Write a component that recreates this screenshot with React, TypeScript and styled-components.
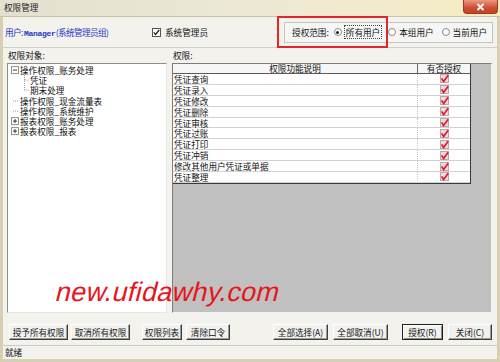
import React from "react";
import styled, { createGlobalStyle } from "styled-components";

const FONT = `"Noto Sans CJK SC", "Noto Sans", sans-serif`;

const GlobalStyle = createGlobalStyle`
  html, body { margin: 0; padding: 0; background: #ffffff; }
  body { font-family: ${FONT}; }
  * { box-sizing: border-box; }
`;

const Window = styled.div`
  position: relative;
  width: 500px;
  height: 362px;
  display: flex;
  flex-direction: column;
  background: #d6cfb4;
  font-family: ${FONT};
  font-size: 8.6px;
  color: #111;
  overflow: hidden;
`;

const TitleBar = styled.div`
  flex: none;
  height: 17px;
  display: flex;
  justify-content: space-between;
  padding-left: 4px;
  background: linear-gradient(to right, #e4e0d0, #ece8d6 45%, #f6ecc4);
  border-bottom: 1px solid #c9c2a6;
`;

const Title = styled.span`
  line-height: 15px;
  color: #222;
`;

const CloseButton = styled.div`
  width: 35px;
  height: 14px;
  margin-right: 2px;
  border: 1px solid #9b3b26;
  border-top: none;
  border-radius: 0 0 4px 4px;
  background: linear-gradient(#ec9a80, #cf4d31 60%, #c44328);
  display: flex;
  align-items: center;
  justify-content: center;
`;

const Body = styled.div`
  position: relative;
  flex: 1;
  margin: 0 3px 3px 3px;
  display: flex;
  flex-direction: column;
  background: #f3f2ed;
`;

const TopPanel = styled.div`
  flex: none;
  height: 31px;
  display: flex;
  align-items: center;
  padding: 0 4px 0 2px;
  border-bottom: 1px solid #cfcfcf;
`;

const UserLabel = styled.div`
  width: 147px;
  color: #2338c8;
  white-space: nowrap;
  letter-spacing: -0.6px;
`;

const UserName = styled.span`
  font-family: "Liberation Mono", monospace;
  font-size: 8px;
  font-weight: bold;
  letter-spacing: -0.3px;
`;

const CheckLabel = styled.label`
  display: flex;
  align-items: center;
  gap: 4px;
`;

const CheckBox = styled.span`
  width: 9px;
  height: 9px;
  border: 1px solid #555;
  background: #fff;
  display: flex;
  align-items: center;
  justify-content: center;
`;

const RadioGroup = styled.div`
  margin-left: auto;
  height: 21px;
  display: flex;
  align-items: center;
  padding: 0 5px 0 7px;
  border: 1px solid #c4c4c4;
  background: #f6f6f4;
`;

const RadioItem = styled.span<{ $gap: number }>`
  display: flex;
  align-items: center;
  gap: 3px;
  margin-left: ${(p) => p.$gap}px;
  white-space: nowrap;
`;

const RadioDot = styled.span<{ $on?: boolean }>`
  width: 8px;
  height: 8px;
  border-radius: 50%;
  border: 1px solid #8a8a8a;
  background: #fff;
  display: flex;
  align-items: center;
  justify-content: center;
  &::after {
    content: "";
    width: 3px;
    height: 3px;
    border-radius: 50%;
    background: ${(p) => (p.$on ? "#222" : "transparent")};
  }
`;

const Focused = styled.span`
  outline: 1px dotted #444;
  outline-offset: 0px;
  padding: 0 1px;
`;

const RedFrame = styled.div`
  position: absolute;
  left: 274px;
  top: -1px;
  width: 111px;
  height: 32px;
  border: 2px solid #e2262b;
  pointer-events: none;
`;

const Main = styled.div`
  flex: 1;
  display: flex;
  gap: 5px;
  padding: 0 5px 0 4px;
  min-height: 0;
`;

const Pane = styled.div<{ $w?: number }>`
  display: flex;
  flex-direction: column;
  ${(p) => (p.$w ? `width: ${p.$w}px; flex: none;` : "flex: 1;")}
`;

const PaneLabel = styled.div`
  height: 15px;
  line-height: 15px;
  padding-left: 1px;
`;

const TreeBox = styled.div`
  flex: 1;
  background: #fff;
  border: 1px solid;
  border-color: #8d8d8d #e6e6e6 #e6e6e6 #8d8d8d;
  padding-top: 1px;
`;

const TreeRow = styled.div<{ $indent: number }>`
  display: flex;
  align-items: center;
  height: 10.2px;
  line-height: 10px;
  padding-left: ${(p) => p.$indent}px;
  white-space: nowrap;
`;

const Twig = styled.svg<{ $w: number }>`
  flex: none;
  width: ${(p) => p.$w}px;
  height: 10.2px;
  margin-right: 1px;
`;

const GridBox = styled.div`
  flex: 1;
  background: #c0c0c0;
  border: 1px solid;
  border-color: #7d7d7d #f4f4f4 #f4f4f4 #7d7d7d;
`;

const Table = styled.div`
  display: grid;
  grid-template-columns: 245px 52px;
  grid-template-rows: 10px repeat(10, 10.9px);
  width: 298px;
  background: #fff;
  border-right: 1px solid #3a3a3a;
  border-bottom: 1px solid #3a3a3a;
`;

const HeadCell = styled.div`
  background: #f6f6f6;
  border-right: 1px solid #6a6a6a;
  border-bottom: 1px solid #5a5a5a;
  text-align: center;
  line-height: 9px;
  &:nth-child(2) { border-right: none; }
`;

const Cell = styled.div<{ $center?: boolean }>`
  border-bottom: 1px solid #d2d2d2;
  border-right: ${(p) => (p.$center ? "none" : "1px dotted #c4c4c4")};
  padding-left: 1px;
  line-height: 10px;
  white-space: nowrap;
  display: flex;
  align-items: center;
  justify-content: ${(p) => (p.$center ? "center" : "flex-start")};
`;

const ButtonBar = styled.div`
  flex: none;
  height: 32px;
  display: flex;
  padding: 11px 5px 5px 6px;
`;

const Button = styled.button<{ $w: number; $gap: number; $default?: boolean }>`
  width: ${(p) => p.$w}px;
  height: 16px;
  margin-left: ${(p) => p.$gap}px;
  padding: 0;
  font-family: ${FONT};
  font-size: 8.6px;
  color: #111;
  background: #f1f1ef;
  border: 1px solid;
  border-color: ${(p) => (p.$default ? "#202020" : "#ffffff #3e3e3e #3e3e3e #ffffff")};
  box-shadow: ${(p) =>
    p.$default
      ? "inset 1px 1px #fff, inset -1px -1px #8a8a8a"
      : "inset -1px -1px #9a9a9a"};
  line-height: 14px;
  white-space: nowrap;
`;

const StatusBar = styled.div`
  flex: none;
  height: 14px;
  line-height: 13px;
  padding-left: 2px;
  border-top: 1px solid #cacaca;
  background: #f3f2ed;
`;

const Watermark = styled.div`
  position: absolute;
  left: 53px;
  top: 279px;
  font-family: "Liberation Sans", Arial, sans-serif;
  font-size: 27px;
  line-height: 27px;
  letter-spacing: 0.3px;
  color: #e8141c;
  white-space: nowrap;
  pointer-events: none;
  transform: skewX(-14deg);
  transform-origin: left bottom;
`;

const Expander = ({ plus }: { plus?: boolean }) => (
  <Twig $w={8} viewBox="0 0 8 10.2">
    <rect x="0.5" y="1.6" width="7" height="7" fill="#fff" stroke="#8f8f8f" strokeWidth="1" />
    <line x1="2" y1="5.1" x2="6" y2="5.1" stroke="#333" strokeWidth="1" />
    {plus && <line x1="4" y1="3.1" x2="4" y2="7.1" stroke="#333" strokeWidth="1" />}
  </Twig>
);

const LeafTwig = () => (
  <Twig $w={8} viewBox="0 0 8 10.2">
    <line x1="2" y1="5.1" x2="8" y2="5.1" stroke="#9a9a9a" strokeWidth="1" strokeDasharray="1 1" />
  </Twig>
);

const ChildTwig = ({ last }: { last?: boolean }) => (
  <Twig $w={5} viewBox="0 0 5 10.2">
    <line x1="0.5" y1="0" x2="0.5" y2={last ? 5.1 : 10.2} stroke="#9a9a9a" strokeWidth="1" strokeDasharray="1 1" />
    <line x1="0.5" y1="5.1" x2="5" y2="5.1" stroke="#9a9a9a" strokeWidth="1" strokeDasharray="1 1" />
  </Twig>
);

const CheckMark = () => (
  <svg width="9" height="9" viewBox="0 0 9 9">
    <rect x="0.5" y="0.5" width="8" height="8" fill="#eedcdc" stroke="#b8a8a8" strokeWidth="1" />
    <path d="M1.6 4.4 L3.6 7.4 L8.2 1.2" fill="none" stroke="#e0182a" strokeWidth="1.7" />
  </svg>
);

type TreeItem = { kind: "minus" | "plus" | "leaf" | "child" | "last"; text: string };

const treeItems: TreeItem[] = [
  { kind: "minus", text: "操作权限_账务处理" },
  { kind: "child", text: "凭证" },
  { kind: "last", text: "期末处理" },
  { kind: "leaf", text: "操作权限_现金流量表" },
  { kind: "leaf", text: "操作权限_系统维护" },
  { kind: "plus", text: "报表权限_账务处理" },
  { kind: "plus", text: "报表权限_报表" },
];

const rights = [
  "凭证查询",
  "凭证录入",
  "凭证修改",
  "凭证删除",
  "凭证审核",
  "凭证过账",
  "凭证打印",
  "凭证冲销",
  "修改其他用户凭证或单据",
  "凭证整理",
];

const buttons = [
  { t: "授予所有权限", w: 59, g: 0 },
  { t: "取消所有权限", w: 59, g: 3 },
  { t: "权限列表", w: 40, g: 12 },
  { t: "清除口令", w: 44, g: 4 },
  { t: "全部选择(A)", w: 55, g: 43 },
  { t: "全部取消(U)", w: 55, g: 5 },
  { t: "授权(R)", w: 41, g: 14, d: true },
  { t: "关闭(C)", w: 44, g: 5 },
];

export default function App() {
  return (
    <>
      <GlobalStyle />
      <Window>
        <TitleBar>
          <Title>权限管理</Title>
          <CloseButton>
            <svg width="9" height="8" viewBox="0 0 9 8">
              <path d="M1.5 1 L7.5 7 M7.5 1 L1.5 7" stroke="#fff" strokeWidth="1.8" />
            </svg>
          </CloseButton>
        </TitleBar>
        <Body>
          <TopPanel>
            <UserLabel>
              用户: <UserName>Manager</UserName>(系统管理员组)
            </UserLabel>
            <CheckLabel>
              <CheckBox>
                <svg width="7" height="7" viewBox="0 0 7 7">
                  <path d="M0.8 3.4 L2.6 5.4 L6.2 1" fill="none" stroke="#222" strokeWidth="1.3" />
                </svg>
              </CheckBox>
              系统管理员
            </CheckLabel>
            <RadioGroup>
              <span>授权范围:</span>
              <RadioItem $gap={5}>
                <RadioDot $on />
                <Focused>所有用户</Focused>
              </RadioItem>
              <RadioItem $gap={7}>
                <RadioDot />
                本组用户
              </RadioItem>
              <RadioItem $gap={8}>
                <RadioDot />
                当前用户
              </RadioItem>
            </RadioGroup>
          </TopPanel>
          <RedFrame />
          <Main>
            <Pane $w={160}>
              <PaneLabel>权限对象:</PaneLabel>
              <TreeBox>
                {treeItems.map((it) => {
                  const child = it.kind === "child" || it.kind === "last";
                  return (
                    <TreeRow key={it.text} $indent={child ? 16 : 3}>
                      {it.kind === "minus" && <Expander />}
                      {it.kind === "plus" && <Expander plus />}
                      {it.kind === "leaf" && <LeafTwig />}
                      {it.kind === "child" && <ChildTwig />}
                      {it.kind === "last" && <ChildTwig last />}
                      {it.text}
                    </TreeRow>
                  );
                })}
              </TreeBox>
            </Pane>
            <Pane>
              <PaneLabel>权限:</PaneLabel>
              <GridBox>
                <Table>
                  <HeadCell>权限功能说明</HeadCell>
                  <HeadCell>有否授权</HeadCell>
                  {rights.map((r) => (
                    <React.Fragment key={r}>
                      <Cell>{r}</Cell>
                      <Cell $center>
                        <CheckMark />
                      </Cell>
                    </React.Fragment>
                  ))}
                </Table>
              </GridBox>
            </Pane>
          </Main>
          <ButtonBar>
            {buttons.map((b) => (
              <Button key={b.t} $w={b.w} $gap={b.g} $default={b.d}>
                {b.t}
              </Button>
            ))}
          </ButtonBar>
          <StatusBar>就绪</StatusBar>
        </Body>
        <Watermark>new.ufidawhy.com</Watermark>
      </Window>
    </>
  );
}
